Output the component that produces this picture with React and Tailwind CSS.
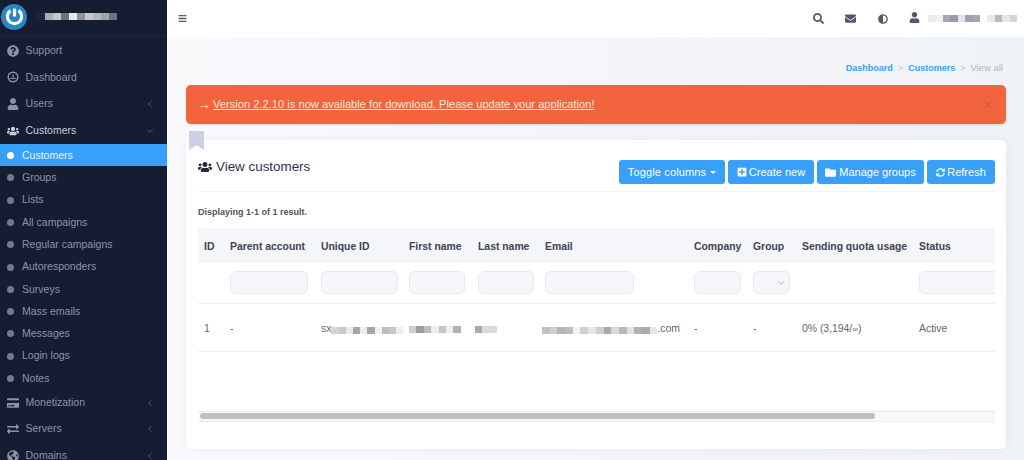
import React from 'react';
import { ChevronLeft, ChevronDown, X } from 'lucide-react';
import {
  FaQuestionCircle, FaUser, FaUsers, FaCreditCard, FaExchangeAlt, FaGlobeAmericas,
  FaSearch, FaEnvelope, FaAdjust, FaFolder, FaPlusSquare, FaSyncAlt, FaBars,
} from 'react-icons/fa';

// Masked values are rendered as rows of grey blocks
function Masked({ shades, cell = 7, height = 7, className = '' }) {
  return (
    <span className={`inline-flex shrink-0 ${className}`}>
      {shades.map((shade, i) => (
        <span key={i} style={{ width: cell, height, background: shade }} />
      ))}
    </span>
  );
}

function DashboardIcon({ className }) {
  return (
    <svg viewBox="0 0 14 14" className={className} fill="none" stroke="currentColor">
      <circle cx="7" cy="7" r="5.6" strokeWidth="1.7" />
      <path d="M7 7.6 7 4" strokeWidth="1.5" />
      <path d="M3.6 8.6h6.8" strokeWidth="1.3" />
    </svg>
  );
}

const topItemsBefore = [
  { name: 'Support', icon: FaQuestionCircle },
  { name: 'Dashboard', icon: DashboardIcon },
  { name: 'Users', icon: FaUser, arrow: 'left' },
  { name: 'Customers', icon: FaUsers, arrow: 'down', bright: true },
];

const subItems = [
  'Customers', 'Groups', 'Lists', 'All campaigns', 'Regular campaigns', 'Autoresponders',
  'Surveys', 'Mass emails', 'Messages', 'Login logs', 'Notes',
];

const topItemsAfter = [
  { name: 'Monetization', icon: FaCreditCard, arrow: 'left' },
  { name: 'Servers', icon: FaExchangeAlt, arrow: 'left' },
  { name: 'Domains', icon: FaGlobeAmericas, arrow: 'left' },
];

function TopItem({ item }) {
  const Icon = item.icon;
  return (
    <div className={`flex h-[26.6px] shrink-0 items-center pl-[7px] pr-[12px] ${item.bright ? 'text-[#c9cdd8]' : 'text-[#8d93a5]'}`}>
      <Icon className="h-[12px] w-[12px] shrink-0" />
      <span className="ml-[6.5px] flex-1 text-[10.5px]">{item.name}</span>
      {item.arrow === 'left' && <ChevronLeft className="h-[10px] w-[10px] text-[#5d6478]" />}
      {item.arrow === 'down' && <ChevronDown className="h-[10px] w-[10px] text-[#5d6478]" />}
    </div>
  );
}

function Sidebar() {
  return (
    <aside className="flex h-full w-[167px] shrink-0 flex-col overflow-hidden bg-[#161d33]">
      <div className="flex h-[36px] shrink-0 items-center border-b border-[#1c2339] pb-[2px] pl-[1px]">
        <div className="flex h-[26px] w-[26px] items-center justify-center rounded-full bg-[#2b86c5]">
          <svg viewBox="0 0 20 20" className="h-[21px] w-[21px]" fill="none" stroke="#ffffff" strokeWidth="3">
            <path d="M6.2 4.4a6.8 6.8 0 1 0 7.6 0" />
            <path d="M10 2.5v7.5" />
          </svg>
        </div>
        <Masked
          className="ml-[10px]"
          cell={8}
          height={7}
          shades={['#1f2639', '#a9acb4', '#c4c6cb', '#6d7280', '#e8e9eb', '#8f939d', '#c4c6cb', '#b4b6bc', '#a0a3ab', '#6d7280']}
        />
      </div>
      <div className="flex shrink-0 flex-col pt-[1.6px]">
        {topItemsBefore.map((item) => <TopItem key={item.name} item={item} />)}
      </div>
      <div className="flex shrink-0 flex-col">
        {subItems.map((name, i) => (
          <div
            key={name}
            className={`flex h-[22.3px] shrink-0 items-center pl-[7px] pt-[1px] text-[10.5px] ${i === 0 ? 'bg-[#38a0f8] text-[#e8f3fe]' : 'text-[#8d93a5]'}`}
          >
            <span className={`mr-[8px] h-[7px] w-[7px] rounded-full ${i === 0 ? 'bg-white' : 'bg-[#717a92]'}`} />
            {name}
          </div>
        ))}
      </div>
      <div className="flex shrink-0 flex-col">
        {topItemsAfter.map((item) => <TopItem key={item.name} item={item} />)}
      </div>
    </aside>
  );
}

function Topbar() {
  return (
    <header className="flex h-[37px] shrink-0 items-center justify-between bg-white pl-[11px] pr-[7px] text-[#55586a]">
      <FaBars className="h-[9px] w-[9px]" />
      <div className="flex items-center">
        <FaSearch className="h-[11px] w-[11px]" />
        <FaEnvelope className="ml-[21px] h-[11px] w-[11px]" />
        <FaAdjust className="ml-[22px] h-[10px] w-[10px]" />
        <FaUser className="ml-[21px] h-[11px] w-[11px] -translate-y-[1px]" />
        <Masked
          className="ml-[8px]"
          cell={7.5}
          height={7}
          shades={['#ebebef', '#f0f0f3', '#a7a8b4', '#9a9ba8', '#e3e3e8', '#a0a1ad', '#a7a8b4']}
        />
        <Masked
          className="ml-[7px]"
          cell={7.5}
          height={7}
          shades={['#e9e9ed', '#b8b9c3', '#e6e6ea', '#d5d5db']}
        />
      </div>
    </header>
  );
}

const columns = [
  { name: 'ID', width: 'w-[26px]' },
  { name: 'Parent account', width: 'w-[91px]', filter: 'w-[78px]' },
  { name: 'Unique ID', width: 'w-[88px]', filter: 'w-[77px]' },
  { name: 'First name', width: 'w-[69px]', filter: 'w-[56px]' },
  { name: 'Last name', width: 'w-[67px]', filter: 'w-[56px]' },
  { name: 'Email', width: 'w-[149px]', filter: 'w-[89px]' },
  { name: 'Company', width: 'w-[59px]', filter: 'w-[47px]' },
  { name: 'Group', width: 'w-[49px]', filter: 'w-[37px]', select: true },
  { name: 'Sending quota usage', width: 'w-[117px]' },
  { name: 'Status', width: 'w-[110px]', filter: 'w-[90px]' },
];

function CustomersTable() {
  return (
    <div className="overflow-hidden">
      <table className="w-[825px] table-fixed border-collapse text-[10.4px]">
        <colgroup>
          {columns.map((col) => <col key={col.name} className={col.width} />)}
        </colgroup>
        <thead>
          <tr className="h-[35px] bg-[#f4f6f9] text-[#3f4256]">
            {columns.map((col) => (
              <th key={col.name} className="px-[6px] pt-[2px] text-left font-bold whitespace-nowrap">{col.name}</th>
            ))}
          </tr>
          <tr className="h-[40px] border-b border-[#edeef2]">
            {columns.map((col) => (
              <td key={col.name} className="px-[6px]">
                {col.filter && (
                  <div className={`flex h-[23px] items-center justify-end rounded-[6px] border border-[#e6e9f0] bg-[#f4f6f9] pr-[3px] ${col.filter}`}>
                    {col.select && <ChevronDown className="h-[10px] w-[10px] text-[#a5a8b2]" />}
                  </div>
                )}
              </td>
            ))}
          </tr>
        </thead>
        <tbody>
          <tr className="h-[48px] border-b border-[#edeef2] text-[#626575] [&>td]:pt-[4px]">
            <td className="px-[6px]">1</td>
            <td className="px-[6px]">-</td>
            <td className="px-[6px]">
              <span className="flex items-center">
                sx
                <Masked
                  className="translate-y-[2px]"
                  cell={7.2}
                  shades={['#d5d5d8', '#c8c8cc', '#ececee', '#a5a5aa', '#ececee', '#a5a5aa', '#f0f0f2', '#bdbdc1', '#c8c8cc', '#eeeeef']}
                />
              </span>
            </td>
            <td className="px-[6px]">
              <Masked
                className="translate-y-[1px]"
                cell={7.4}
                shades={['#cfcfd3', '#9c9ca2', '#bcbcc1', '#eeeeef', '#c4c4c8', '#eeeeef', '#afafb4']}
              />
            </td>
            <td className="px-[3px]">
              <Masked className="translate-y-[1px]" cell={7.4} shades={['#a9a9ae', '#dadadd', '#dadadd']} />
            </td>
            <td className="px-[3px]">
              <span className="flex items-center whitespace-nowrap">
                <Masked
                  className="translate-y-[2px]"
                  cell={7.7}
                  shades={['#c2c2c6', '#cfcfd3', '#b6b6ba', '#bdbdc1', '#f0f0f2', '#d0d0d4', '#e6e6e8', '#cfcfd3', '#a9a9ae', '#d8d8db', '#b9b9bd', '#e2e2e4', '#b0b0b5', '#a9a9ae', '#e8e8ea']}
                />
                .com
              </span>
            </td>
            <td className="px-[6px]">-</td>
            <td className="px-[6px]">-</td>
            <td className="px-[6px] whitespace-nowrap">0% (3,194/<span className="text-[8px]">∞</span>)</td>
            <td className="px-[6px]">Active</td>
          </tr>
        </tbody>
      </table>
      {/* horizontal scrollbar of the table */}
      <div className="mt-[59px] flex h-[11px] items-center border-y border-[#ececee] bg-[#f8f8f8] pl-[2px]">
        <div className="h-[6px] w-[675px] rounded-full bg-[#bfc0c2]" />
      </div>
    </div>
  );
}

const Button = ({ children, className = 'px-[9px]' }) => (
  <button className={`flex h-[24px] items-center justify-center rounded-[3px] bg-[#38a0f8] text-[11px] font-normal whitespace-nowrap text-white ${className}`}>
    {children}
  </button>
);

function App() {
  return (
    <div className="flex h-[460px] w-[1024px] overflow-hidden bg-[#f1f4f8] font-['Liberation_Sans',Arial,sans-serif]">
      <Sidebar />
      <div className="flex min-w-0 flex-1 flex-col">
        <Topbar />
        <main className="flex flex-1 flex-col bg-gradient-to-r from-[#f8fafc] to-[#eff2f6] pl-[19px] pr-[18px]">
          <nav className="flex h-[48px] shrink-0 items-end justify-end pb-[10px] pr-[3px] text-[9px]">
            <span className="font-bold text-[#38a0f8]">Dashboard</span>
            <span className="mx-[5px] text-[#c5c8d0]">&gt;</span>
            <span className="font-bold text-[#38a0f8]">Customers</span>
            <span className="mx-[5px] text-[#c5c8d0]">&gt;</span>
            <span className="text-[9.5px] text-[#b4b7c0]">View all</span>
          </nav>

          <div className="flex h-[39px] shrink-0 items-center justify-between rounded-[5px] bg-[#f1643e] pl-[11px] pr-[12px] text-[11.15px] text-[#fde6de] shadow-sm">
            <span className="flex items-center">
              <span className="mr-[2px] text-[14px] leading-none">→</span>
              <span className="underline">Version 2.2.10 is now available for download. Please update your application!</span>
            </span>
            <X className="h-[11px] w-[11px] text-[#b5543a]" />
          </div>

          <section className="relative mt-[16px] flex h-[309px] shrink-0 flex-col rounded-[5px] bg-white pl-[12px] pr-[11px] shadow-[0_0_12px_rgba(30,40,70,0.05)]">
            {/* bookmark tab on the card corner */}
            <svg viewBox="0 0 15 19" className="absolute -top-[9px] left-[3px] h-[19px] w-[15px]">
              <path d="M0 0h15v19l-7.5-5L0 19z" fill="#cdd0e3" />
            </svg>

            <div className="flex h-[52px] shrink-0 items-end justify-between border-b border-[#eff0f3] pb-[7px]">
              <h2 className="mb-[7px] flex items-center text-[13.4px] font-normal text-[#2f3348]">
                <FaUsers className="mr-[4px] h-[14px] w-[14px] text-[#23273b]" />
                View customers
              </h2>
              <div className="flex gap-[3px]">
                <Button className="w-[106px] tracking-[0.15px]">
                  Toggle columns
                  <span className="ml-[4px] h-0 w-0 border-x-[3px] border-t-[3px] border-x-transparent border-t-white" />
                </Button>
                <Button className="w-[86px]"><FaPlusSquare className="mr-[2px] h-[10px] w-[10px]" />Create new</Button>
                <Button className="w-[107px]"><FaFolder className="mr-[3px] h-[11px] w-[11px]" />Manage groups</Button>
                <Button className="w-[68px]"><FaSyncAlt className="mr-[2px] h-[9px] w-[9px]" />Refresh</Button>
              </div>
            </div>

            <p className="flex h-[36px] shrink-0 items-center pt-[6px] text-[9px] font-bold text-[#50535f]">
              Displaying 1-1 of 1 result.
            </p>

            <CustomersTable />
          </section>
        </main>
      </div>
    </div>
  );
}

export default App;
